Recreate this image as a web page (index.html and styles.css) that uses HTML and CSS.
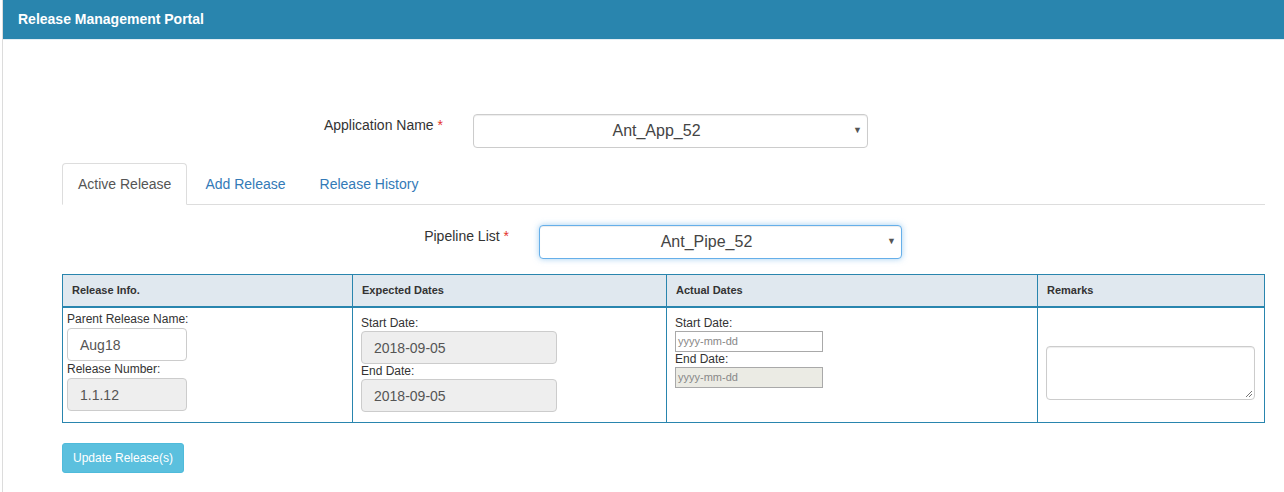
FILE: index.html
```html
<!DOCTYPE html>
<html>
<head>
<meta charset="utf-8">
<link rel="stylesheet" href="styles.css">
</head>
<body>
<div class="page">
  <header class="topbar">Release Management Portal</header>
  <main class="content">
    <div class="form-row app-row">
      <label class="row-label app-label">Application Name <span class="req">*</span></label>
      <div class="select app-select"><span class="sel-text">Ant_App_52</span><span class="caret">▼</span></div>
    </div>
    <ul class="tabs">
      <li class="tab active">Active Release</li>
      <li class="tab">Add Release</li>
      <li class="tab">Release History</li>
    </ul>
    <div class="form-row pipe-row">
      <label class="row-label pipe-label">Pipeline List <span class="req">*</span></label>
      <div class="select pipe-select focus"><span class="sel-text">Ant_Pipe_52</span><span class="caret">▼</span></div>
    </div>
    <table class="rel-table">
      <colgroup>
        <col class="c1"><col class="c2"><col class="c3"><col class="c4">
      </colgroup>
      <thead>
        <tr><th>Release Info.</th><th>Expected Dates</th><th>Actual Dates</th><th>Remarks</th></tr>
      </thead>
      <tbody>
        <tr>
          <td class="cell-info">
            <div class="lbl">Parent Release Name:</div>
            <div class="inp small">Aug18</div>
            <div class="lbl">Release Number:</div>
            <div class="inp small ro">1.1.12</div>
          </td>
          <td class="cell-exp">
            <div class="lbl">Start Date:</div>
            <div class="inp wide ro">2018-09-05</div>
            <div class="lbl">End Date:</div>
            <div class="inp wide ro">2018-09-05</div>
          </td>
          <td class="cell-act">
            <div class="lbl">Start Date:</div>
            <div class="date">yyyy-mm-dd</div>
            <div class="lbl">End Date:</div>
            <div class="date dis">yyyy-mm-dd</div>
          </td>
          <td class="cell-rem">
            <div class="textarea"><svg class="grip" width="8" height="8" viewBox="0 0 8 8"><path d="M7 1 L1 7 M7 4 L4 7" stroke="#777" stroke-width="1" fill="none"/></svg></div>
          </td>
        </tr>
      </tbody>
    </table>
    <button class="btn">Update Release(s)</button>
  </main>
</div>
</body>
</html>
```
FILE: styles.css
```css
* { box-sizing: border-box; }
html, body { margin: 0; padding: 0; background: #fff; }
body {
  font-family: "Liberation Sans", Arial, sans-serif;
  font-size: 14px;
  color: #333;
}
.page {
  margin-left: 2px;
  border-left: 1px solid #dcdcdc;
  min-height: 492px;
}
.topbar {
  height: 40px;
  background: #2985ae;
  border-bottom: 1px solid #e3eef4;
  color: #fff;
  font-weight: bold;
  font-size: 14px;
  padding: 11px 0 0 15px;
}
.content {
  padding: 0 19px 0 59px;
}
.form-row {
  display: flex;
  align-items: flex-start;
}
.row-label {
  text-align: right;
  padding-top: 3px;
  font-size: 14px;
}
.req { color: #e4322b; }
.app-row { margin-top: 74px; }
.app-label { width: 381px; }
.app-select { margin-left: 30px; width: 395px; }
.pipe-row { margin-top: 20px; }
.pipe-label { width: 447px; }
.pipe-select { margin-left: 30px; width: 363px; }
.select {
  position: relative;
  height: 34px;
  border: 1px solid #ccc;
  border-radius: 4px;
  background: #fff;
  display: flex;
  align-items: center;
  justify-content: center;
  padding-right: 28px;
  font-size: 16px;
  color: #444;
  box-shadow: inset 0 1px 1px rgba(0,0,0,.075);
}
.select.focus {
  border-color: #66afe9;
  box-shadow: inset 0 1px 1px rgba(0,0,0,.075), 0 0 6px rgba(102,175,233,.6);
}
.caret {
  position: absolute;
  right: 5px;
  top: 10px;
  font-size: 9px;
  color: #555;
}
.tabs {
  list-style: none;
  margin: 15px 0 0 0;
  padding: 0;
  display: flex;
  border-bottom: 1px solid #ddd;
}
.tab {
  margin-right: 2px;
  margin-bottom: -1px;
  padding: 10px 15px 10px;
  line-height: 20px;
  border: 1px solid transparent;
  border-radius: 4px 4px 0 0;
  color: #337ab7;
}
.tab.active {
  color: #555;
  background: #fff;
  border-color: #ddd #ddd transparent;
}
.rel-table {
  margin-top: 15px;
  width: 1202px;
  border-collapse: collapse;
  table-layout: fixed;
}
.c1 { width: 290px; }
.c2 { width: 314px; }
.c3 { width: 371px; }
.c4 { width: 227px; }
.rel-table th, .rel-table td {
  border: 1px solid #2985ae;
}
.rel-table th {
  background: #e0e8ef;
  font-size: 11px;
  text-align: left;
  padding: 0 9px;
  height: 32px;
  border-bottom-width: 2px;
  color: #333;
}
.rel-table td {
  vertical-align: top;
  height: 116px;
  font-size: 12px;
}
.lbl { font-size: 12px; line-height: 13px; }
.cell-info { padding: 5px 4px 0; }
.cell-info .inp { margin: 2px 0 2px; }
.inp {
  height: 33px;
  border: 1px solid #ccc;
  border-radius: 4px;
  font-size: 14px;
  padding: 8px 12px 0;
  color: #555;
  background: #fff;
}
.inp.ro { background: #eee; }
.inp.small { width: 120px; }
.inp.wide { width: 196px; }
.cell-exp { padding: 9px 8px 0; }
.cell-exp .inp { margin: 1px 0 1px; }
.cell-act { padding: 9px 8px 0; }
.date {
  width: 148px;
  height: 21px;
  border: 1px solid #a9a9a9;
  font-size: 11px;
  color: #888;
  padding: 3px 2px 0;
  margin: 1px 0 1px;
  background: #fff;
}
.date.dis { background: #ebebe4; }
.cell-rem { padding: 38px 9px 0 8px; }
.textarea {
  position: relative;
  width: 209px;
  height: 54px;
  border: 1px solid #ccc;
  border-radius: 4px;
  box-shadow: inset 0 1px 1px rgba(0,0,0,.075);
}
.grip { position: absolute; right: 1px; bottom: 1px; }
.btn {
  display: block;
  margin-top: 20px;
  width: 122px;
  height: 30px;
  border: 1px solid #4fbbdb;
  border-radius: 3px;
  background: #5bc0de;
  color: #fff;
  font-family: "Liberation Sans", Arial, sans-serif;
  font-size: 12px;
  padding: 0;
}
```
